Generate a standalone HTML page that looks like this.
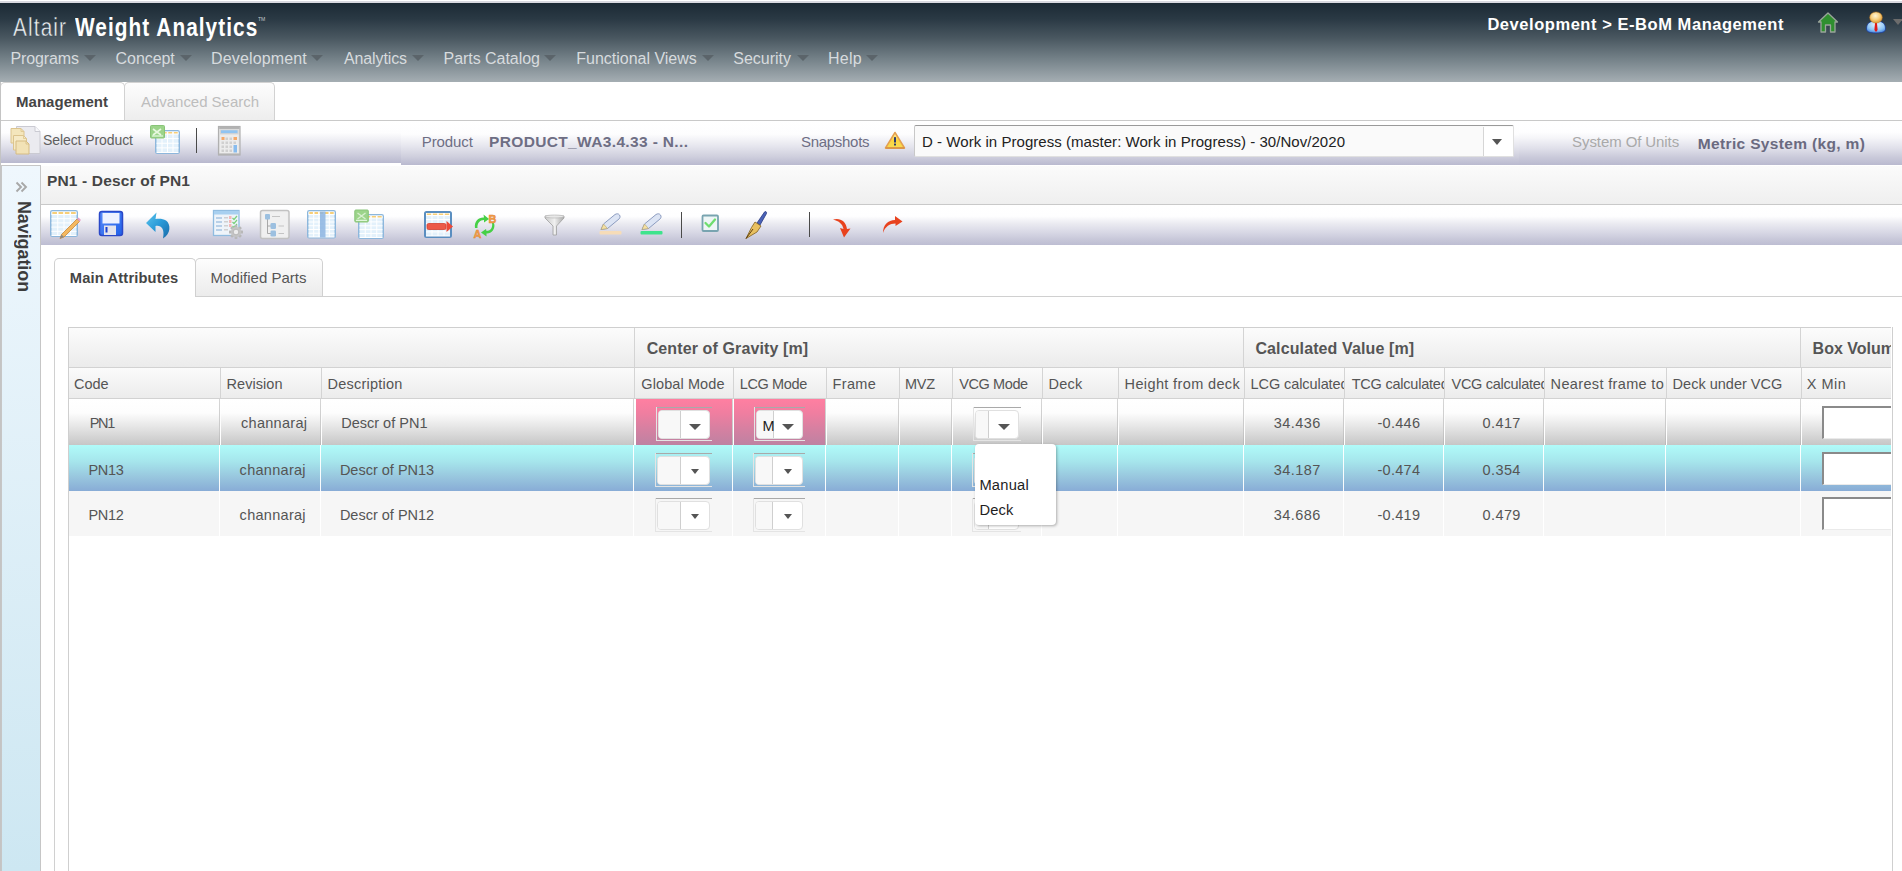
<!DOCTYPE html>
<html><head><meta charset="utf-8">
<style>
*{box-sizing:border-box;margin:0;padding:0}
html,body{width:1902px;height:871px;overflow:hidden;background:#fff;font-family:"Liberation Sans",sans-serif;position:relative}
.a{position:absolute}
.t{position:absolute;white-space:nowrap;line-height:1}
.tri{position:absolute;width:0;height:0;border-left:6px solid transparent;border-right:6px solid transparent;border-top:6.5px solid #5b646a}
svg{position:absolute;overflow:visible}
</style></head><body>
<div class="a" style="left:0;top:1px;width:1902px;height:2px;background:#d9d9e0"></div>
<div class="a" style="left:0;top:3px;width:1902px;height:79px;background:linear-gradient(#1c2a35 0%,#2a3944 20%,#4a5861 45%,#76838a 72%,#a5aeb3 100%)"></div>
<div class="t" style="left:13.00px;top:14px;color:#eef1f3;font-size:26px;letter-spacing:1.403px;transform-origin:0 0;transform:scaleX(0.8000);-webkit-text-stroke:0.45px #34444f;">Altair</div>
<div class="t" style="left:75.00px;top:14px;color:#ffffff;font-size:26px;font-weight:bold;letter-spacing:1.316px;transform-origin:0 0;transform:scaleX(0.8000);">Weight Analytics</div>
<div class="t" style="left:257.5px;top:16px;font-size:6px;color:#c4c8cc;transform-origin:0 0;transform:scaleX(.85)">TM</div>
<div class="t" style="left:10.50px;top:51px;color:#d7dbde;font-size:16px;letter-spacing:-0.122px;">Programs</div>
<div class="tri" style="left:84px;top:55px"></div>
<div class="t" style="left:115.60px;top:51px;color:#d7dbde;font-size:16px;letter-spacing:-0.066px;">Concept</div>
<div class="tri" style="left:180px;top:55px"></div>
<div class="t" style="left:211.00px;top:51px;color:#d7dbde;font-size:16px;letter-spacing:0.153px;">Development</div>
<div class="tri" style="left:311px;top:55px"></div>
<div class="t" style="left:344.00px;top:51px;color:#d7dbde;font-size:16px;letter-spacing:-0.128px;">Analytics</div>
<div class="tri" style="left:412px;top:55px"></div>
<div class="t" style="left:443.50px;top:51px;color:#d7dbde;font-size:16px;letter-spacing:-0.036px;">Parts Catalog</div>
<div class="tri" style="left:544px;top:55px"></div>
<div class="t" style="left:576.30px;top:51px;color:#d7dbde;font-size:16px;letter-spacing:-0.010px;">Functional Views</div>
<div class="tri" style="left:702px;top:55px"></div>
<div class="t" style="left:733.30px;top:51px;color:#d7dbde;font-size:16px;letter-spacing:-0.028px;">Security</div>
<div class="tri" style="left:796.5px;top:55px"></div>
<div class="t" style="left:828.00px;top:51px;color:#d7dbde;font-size:16px;letter-spacing:0.231px;">Help</div>
<div class="tri" style="left:866px;top:55px"></div>
<div class="t" style="left:1487.40px;top:16px;color:#ffffff;font-size:16.5px;font-weight:bold;letter-spacing:0.549px;">Development &gt; E-BoM Management</div>
<div class="a" style="left:0;top:82px;width:125px;height:39px;background:#fff;border:1px solid #d2d2d2;border-bottom:none;border-radius:5px 5px 0 0"></div>
<div class="a" style="left:124px;top:82px;width:151px;height:39px;background:linear-gradient(#fdfdfd,#ededed);border:1px solid #d2d2d2;border-bottom:none;border-radius:5px 5px 0 0"></div>
<div class="a" style="left:0;top:120px;width:1902px;height:1px;background:#c9c9c9"></div>
<div class="t" style="left:16.00px;top:94px;color:#454545;font-size:15px;font-weight:bold;letter-spacing:0.035px;">Management</div>
<div class="t" style="left:141.00px;top:94px;color:#bdbdbd;font-size:15px;letter-spacing:-0.029px;">Advanced Search</div>
<div class="a" style="left:1px;top:121px;width:400px;height:42px;background:linear-gradient(#fff 0%,#fdfdfe 28%,#e6e6ee 55%,#cfcfde 78%,#b8b8ce 100%)"></div>
<div class="a" style="left:401px;top:121px;width:1118px;height:44px;background:linear-gradient(#fff 0%,#fdfdfe 30%,#e6e6ee 57%,#d0d0de 80%,#b9b9cf 100%)"></div><div class="a" style="left:1519px;top:121px;width:383px;height:44px;background:linear-gradient(#fff 0%,#fefeff 25%,#f6f6f9 38%,#e0e0ea 62%,#cacada 82%,#b9b9cf 100%)"></div>
<div class="a" style="left:0;top:82px;width:1px;height:789px;background:#c4c4c4"></div>
<div class="t" style="left:43.00px;top:133px;color:#5e5e5e;font-size:14px;letter-spacing:-0.081px;">Select Product</div>
<div class="a" style="left:196px;top:128px;width:1px;height:25px;background:#4a4a4a"></div>
<div class="t" style="left:421.80px;top:134px;color:#6e6e84;font-size:15px;letter-spacing:-0.116px;">Product</div>
<div class="t" style="left:489.00px;top:134px;color:#6e6e84;font-size:15.5px;font-weight:bold;letter-spacing:0.354px;">PRODUCT_WA3.4.33 - N...</div>
<div class="t" style="left:801.00px;top:134px;color:#6e6e84;font-size:15px;letter-spacing:-0.298px;">Snapshots</div>
<div class="a" style="left:914px;top:125px;width:600px;height:32px;background:#fafafa;border:1px solid #e0e0e0;border-top:1px solid #9a9a9a;border-left:1px solid #c8c8c8;border-radius:2px"></div>
<div class="a" style="left:1483px;top:127px;width:30px;height:29px;background:#fff;border-left:1px solid #d6d6d6"></div>
<div class="a" style="left:1492px;top:139px;width:0;height:0;border-left:5.5px solid transparent;border-right:5.5px solid transparent;border-top:6px solid #555"></div>
<div class="t" style="left:922.00px;top:134px;color:#222;font-size:15px;letter-spacing:0.043px;">D - Work in Progress (master: Work in Progress) - 30/Nov/2020</div>
<div class="t" style="left:1572.10px;top:134px;color:#a9a9a9;font-size:15px;letter-spacing:-0.090px;">System Of Units</div>
<div class="t" style="left:1697.80px;top:136px;color:#6a6a80;font-size:15.5px;font-weight:bold;letter-spacing:0.344px;">Metric System (kg, m)</div>
<div class="a" style="left:1px;top:165px;width:40px;height:706px;border:1px solid #c6c6c6;border-bottom:none;background:linear-gradient(#eff7fd,#cde7f2)"></div>
<svg style="left:14px;top:180px" width="16" height="14" viewBox="0 0 16 14"><path d="M2.5 2.5 L7 7 L2.5 11.5 M7.5 2.5 L12 7 L7.5 11.5" stroke="#a8a8a8" stroke-width="1.9" fill="none"/></svg>
<div class="a" style="left:41px;top:166px;width:1861px;height:39px;background:linear-gradient(#fbfbfb,#efefef);border-bottom:1px solid #c9c9c9"></div>
<div class="t" style="left:47.00px;top:173px;color:#454545;font-size:15.5px;font-weight:bold;letter-spacing:0.152px;">PN1 - Descr of PN1</div>
<div class="a" style="left:41px;top:205px;width:1861px;height:40px;background:linear-gradient(#fff 0%,#fefeff 28%,#ececf2 45%,#d8d8e5 68%,#c6c6d8 88%,#bdbdd2 100%)"></div>
<div class="a" style="left:54px;top:258px;width:142px;height:39px;background:#fff;border:1px solid #d0d0d0;border-bottom:none;border-radius:5px 5px 0 0"></div>
<div class="a" style="left:195px;top:258px;width:128px;height:39px;background:linear-gradient(#fdfdfd,#ebebeb);border:1px solid #d0d0d0;border-bottom:none;border-radius:5px 5px 0 0"></div>
<div class="a" style="left:195px;top:296px;width:1707px;height:1px;background:#d0d0d0"></div>
<div class="a" style="left:54px;top:296px;width:1px;height:575px;background:#d0d0d0"></div>
<div class="t" style="left:69.80px;top:271px;color:#454545;font-size:14.7px;font-weight:bold;letter-spacing:0.150px;">Main Attributes</div>
<div class="t" style="left:210.50px;top:270px;color:#555;font-size:15px;letter-spacing:0.010px;">Modified Parts</div>
<div class="a" style="left:68px;top:327px;width:1825px;height:544px;border:1px solid #cfcfcf;border-bottom:none"></div>
<div class="a" style="left:69px;top:328px;width:1822px;height:39px;background:linear-gradient(#fcfcfc,#ebebeb)"></div>
<div class="a" style="left:69px;top:367px;width:1822px;height:1px;background:#d2d2d2"></div>
<div class="a" style="left:69px;top:368px;width:1822px;height:30px;background:linear-gradient(#fbfbfb,#ececec)"></div>
<div class="a" style="left:69px;top:398px;width:1822px;height:1px;background:#d2d2d2"></div>
<div class="a" style="left:634px;top:328px;width:1px;height:39px;background:#d4d4d4"></div>
<div class="a" style="left:1243px;top:328px;width:1px;height:39px;background:#d4d4d4"></div>
<div class="a" style="left:1800px;top:328px;width:1px;height:39px;background:#d4d4d4"></div>
<div class="a" style="left:220px;top:368px;width:1px;height:30px;background:#d4d4d4"></div>
<div class="a" style="left:321px;top:368px;width:1px;height:30px;background:#d4d4d4"></div>
<div class="a" style="left:634px;top:368px;width:1px;height:30px;background:#d4d4d4"></div>
<div class="a" style="left:733px;top:368px;width:1px;height:30px;background:#d4d4d4"></div>
<div class="a" style="left:826px;top:368px;width:1px;height:30px;background:#d4d4d4"></div>
<div class="a" style="left:899px;top:368px;width:1px;height:30px;background:#d4d4d4"></div>
<div class="a" style="left:952px;top:368px;width:1px;height:30px;background:#d4d4d4"></div>
<div class="a" style="left:1042px;top:368px;width:1px;height:30px;background:#d4d4d4"></div>
<div class="a" style="left:1118px;top:368px;width:1px;height:30px;background:#d4d4d4"></div>
<div class="a" style="left:1244px;top:368px;width:1px;height:30px;background:#d4d4d4"></div>
<div class="a" style="left:1344px;top:368px;width:1px;height:30px;background:#d4d4d4"></div>
<div class="a" style="left:1444px;top:368px;width:1px;height:30px;background:#d4d4d4"></div>
<div class="a" style="left:1544px;top:368px;width:1px;height:30px;background:#d4d4d4"></div>
<div class="a" style="left:1666px;top:368px;width:1px;height:30px;background:#d4d4d4"></div>
<div class="a" style="left:1801px;top:368px;width:1px;height:30px;background:#d4d4d4"></div>
<div class="t" style="left:646.70px;top:341px;color:#555;font-size:16px;font-weight:bold;letter-spacing:0.113px;">Center of Gravity [m]</div>
<div class="t" style="left:1255.40px;top:341px;color:#555;font-size:16px;font-weight:bold;letter-spacing:0.121px;">Calculated Value [m]</div>
<div class="t" style="left:1812.60px;top:341px;color:#555;font-size:16px;font-weight:bold;">Box Volume</div>
<div class="a" style="left:69px;top:368px;width:151px;height:30px;overflow:hidden"><div class="t" style="left:5.00px;top:9px;color:#555;font-size:14.5px;letter-spacing:-0.055px;">Code</div></div>
<div class="a" style="left:221px;top:368px;width:100px;height:30px;overflow:hidden"><div class="t" style="left:5.50px;top:9px;color:#555;font-size:14.5px;letter-spacing:0.056px;">Revision</div></div>
<div class="a" style="left:322px;top:368px;width:312px;height:30px;overflow:hidden"><div class="t" style="left:5.50px;top:9px;color:#555;font-size:14.5px;letter-spacing:0.227px;">Description</div></div>
<div class="a" style="left:635px;top:368px;width:98px;height:30px;overflow:hidden"><div class="t" style="left:6.30px;top:9px;color:#555;font-size:14.5px;letter-spacing:0.099px;">Global Mode</div></div>
<div class="a" style="left:734px;top:368px;width:92px;height:30px;overflow:hidden"><div class="t" style="left:5.70px;top:9px;color:#555;font-size:14.5px;letter-spacing:-0.373px;">LCG Mode</div></div>
<div class="a" style="left:827px;top:368px;width:72px;height:30px;overflow:hidden"><div class="t" style="left:5.60px;top:9px;color:#555;font-size:14.5px;letter-spacing:0.327px;">Frame</div></div>
<div class="a" style="left:900px;top:368px;width:52px;height:30px;overflow:hidden"><div class="t" style="left:5.00px;top:9px;color:#555;font-size:14.5px;letter-spacing:-0.254px;">MVZ</div></div>
<div class="a" style="left:953px;top:368px;width:89px;height:30px;overflow:hidden"><div class="t" style="left:6.30px;top:9px;color:#555;font-size:14.5px;letter-spacing:-0.417px;">VCG Mode</div></div>
<div class="a" style="left:1043px;top:368px;width:75px;height:30px;overflow:hidden"><div class="t" style="left:5.40px;top:9px;color:#555;font-size:14.5px;letter-spacing:0.288px;">Deck</div></div>
<div class="a" style="left:1119px;top:368px;width:125px;height:30px;overflow:hidden"><div class="t" style="left:5.60px;top:9px;color:#555;font-size:14.5px;letter-spacing:0.367px;">Height from deck</div></div>
<div class="a" style="left:1245px;top:368px;width:99px;height:30px;overflow:hidden"><div class="t" style="left:5.60px;top:9px;color:#555;font-size:14.5px;letter-spacing:-0.087px;">LCG calculated</div></div>
<div class="a" style="left:1345px;top:368px;width:99px;height:30px;overflow:hidden"><div class="t" style="left:6.70px;top:9px;color:#555;font-size:14.5px;letter-spacing:-0.225px;">TCG calculated</div></div>
<div class="a" style="left:1445px;top:368px;width:99px;height:30px;overflow:hidden"><div class="t" style="left:6.50px;top:9px;color:#555;font-size:14.5px;letter-spacing:-0.288px;">VCG calculated</div></div>
<div class="a" style="left:1545px;top:368px;width:121px;height:30px;overflow:hidden"><div class="t" style="left:5.60px;top:9px;color:#555;font-size:14.5px;letter-spacing:0.348px;">Nearest frame to</div></div>
<div class="a" style="left:1667px;top:368px;width:134px;height:30px;overflow:hidden"><div class="t" style="left:5.60px;top:9px;color:#555;font-size:14.5px;letter-spacing:0.008px;">Deck under VCG</div></div>
<div class="a" style="left:1802px;top:368px;width:89px;height:30px;overflow:hidden"><div class="t" style="left:4.80px;top:9px;color:#555;font-size:14.5px;letter-spacing:0.484px;">X Min</div></div>
<div class="a" style="left:69px;top:399px;width:1822px;height:46px;background:linear-gradient(#ffffff 0%,#fdfdfd 30%,#e6e6e6 60%,#c6c6c6 100%)"></div>
<div class="a" style="left:69px;top:445px;width:1822px;height:46px;background:linear-gradient(#b0fbf9 0%,#a6e6ec 35%,#98c6de 70%,#88acd6 100%)"></div>
<div class="a" style="left:69px;top:491px;width:1822px;height:45px;background:#f6f6f6"></div>
<div class="a" style="left:636px;top:399px;width:97px;height:46px;background:linear-gradient(#ff7fa1 0%,#f07ea0 30%,#d680a1 65%,#be82a2 100%)"></div>
<div class="a" style="left:734px;top:399px;width:92px;height:46px;background:linear-gradient(#ff7fa1 0%,#f07ea0 30%,#d680a1 65%,#be82a2 100%)"></div>
<div class="a" style="left:219px;top:399px;width:1px;height:46px;background:linear-gradient(#d6d6d6,#c8c8c8 70%,#b8b8b8)"></div>
<div class="a" style="left:220px;top:399px;width:1px;height:46px;background:linear-gradient(rgba(255,255,255,.3),#fff 60%)"></div>
<div class="a" style="left:320px;top:399px;width:1px;height:46px;background:linear-gradient(#d6d6d6,#c8c8c8 70%,#b8b8b8)"></div>
<div class="a" style="left:321px;top:399px;width:1px;height:46px;background:linear-gradient(rgba(255,255,255,.3),#fff 60%)"></div>
<div class="a" style="left:633px;top:399px;width:1px;height:46px;background:linear-gradient(#d6d6d6,#c8c8c8 70%,#b8b8b8)"></div>
<div class="a" style="left:634px;top:399px;width:1px;height:46px;background:linear-gradient(rgba(255,255,255,.3),#fff 60%)"></div>
<div class="a" style="left:635px;top:399px;width:1px;height:46px;background:linear-gradient(rgba(255,255,255,.3),#fff 60%)"></div>
<div class="a" style="left:732px;top:399px;width:1px;height:46px;background:linear-gradient(#d6d6d6,#c8c8c8 70%,#b8b8b8)"></div>
<div class="a" style="left:733px;top:399px;width:1px;height:46px;background:linear-gradient(rgba(255,255,255,.3),#fff 60%)"></div>
<div class="a" style="left:825px;top:399px;width:1px;height:46px;background:linear-gradient(#d6d6d6,#c8c8c8 70%,#b8b8b8)"></div>
<div class="a" style="left:826px;top:399px;width:1px;height:46px;background:linear-gradient(rgba(255,255,255,.3),#fff 60%)"></div>
<div class="a" style="left:898px;top:399px;width:1px;height:46px;background:linear-gradient(#d6d6d6,#c8c8c8 70%,#b8b8b8)"></div>
<div class="a" style="left:899px;top:399px;width:1px;height:46px;background:linear-gradient(rgba(255,255,255,.3),#fff 60%)"></div>
<div class="a" style="left:951px;top:399px;width:1px;height:46px;background:linear-gradient(#d6d6d6,#c8c8c8 70%,#b8b8b8)"></div>
<div class="a" style="left:952px;top:399px;width:1px;height:46px;background:linear-gradient(rgba(255,255,255,.3),#fff 60%)"></div>
<div class="a" style="left:1041px;top:399px;width:1px;height:46px;background:linear-gradient(#d6d6d6,#c8c8c8 70%,#b8b8b8)"></div>
<div class="a" style="left:1042px;top:399px;width:1px;height:46px;background:linear-gradient(rgba(255,255,255,.3),#fff 60%)"></div>
<div class="a" style="left:1117px;top:399px;width:1px;height:46px;background:linear-gradient(#d6d6d6,#c8c8c8 70%,#b8b8b8)"></div>
<div class="a" style="left:1118px;top:399px;width:1px;height:46px;background:linear-gradient(rgba(255,255,255,.3),#fff 60%)"></div>
<div class="a" style="left:1243px;top:399px;width:1px;height:46px;background:linear-gradient(#d6d6d6,#c8c8c8 70%,#b8b8b8)"></div>
<div class="a" style="left:1244px;top:399px;width:1px;height:46px;background:linear-gradient(rgba(255,255,255,.3),#fff 60%)"></div>
<div class="a" style="left:1343px;top:399px;width:1px;height:46px;background:linear-gradient(#d6d6d6,#c8c8c8 70%,#b8b8b8)"></div>
<div class="a" style="left:1344px;top:399px;width:1px;height:46px;background:linear-gradient(rgba(255,255,255,.3),#fff 60%)"></div>
<div class="a" style="left:1443px;top:399px;width:1px;height:46px;background:linear-gradient(#d6d6d6,#c8c8c8 70%,#b8b8b8)"></div>
<div class="a" style="left:1444px;top:399px;width:1px;height:46px;background:linear-gradient(rgba(255,255,255,.3),#fff 60%)"></div>
<div class="a" style="left:1543px;top:399px;width:1px;height:46px;background:linear-gradient(#d6d6d6,#c8c8c8 70%,#b8b8b8)"></div>
<div class="a" style="left:1544px;top:399px;width:1px;height:46px;background:linear-gradient(rgba(255,255,255,.3),#fff 60%)"></div>
<div class="a" style="left:1665px;top:399px;width:1px;height:46px;background:linear-gradient(#d6d6d6,#c8c8c8 70%,#b8b8b8)"></div>
<div class="a" style="left:1666px;top:399px;width:1px;height:46px;background:linear-gradient(rgba(255,255,255,.3),#fff 60%)"></div>
<div class="a" style="left:1800px;top:399px;width:1px;height:46px;background:linear-gradient(#d6d6d6,#c8c8c8 70%,#b8b8b8)"></div>
<div class="a" style="left:1801px;top:399px;width:1px;height:46px;background:linear-gradient(rgba(255,255,255,.3),#fff 60%)"></div>
<div class="a" style="left:219px;top:445px;width:1px;height:91px;background:#fff;opacity:.95"></div>
<div class="a" style="left:320px;top:445px;width:1px;height:91px;background:#fff;opacity:.95"></div>
<div class="a" style="left:633px;top:445px;width:1px;height:91px;background:#fff;opacity:.95"></div>
<div class="a" style="left:732px;top:445px;width:1px;height:91px;background:#fff;opacity:.95"></div>
<div class="a" style="left:825px;top:445px;width:1px;height:91px;background:#fff;opacity:.95"></div>
<div class="a" style="left:898px;top:445px;width:1px;height:91px;background:#fff;opacity:.95"></div>
<div class="a" style="left:951px;top:445px;width:1px;height:91px;background:#fff;opacity:.95"></div>
<div class="a" style="left:1041px;top:445px;width:1px;height:91px;background:#fff;opacity:.95"></div>
<div class="a" style="left:1117px;top:445px;width:1px;height:91px;background:#fff;opacity:.95"></div>
<div class="a" style="left:1243px;top:445px;width:1px;height:91px;background:#fff;opacity:.95"></div>
<div class="a" style="left:1343px;top:445px;width:1px;height:91px;background:#fff;opacity:.95"></div>
<div class="a" style="left:1443px;top:445px;width:1px;height:91px;background:#fff;opacity:.95"></div>
<div class="a" style="left:1543px;top:445px;width:1px;height:91px;background:#fff;opacity:.95"></div>
<div class="a" style="left:1665px;top:445px;width:1px;height:91px;background:#fff;opacity:.95"></div>
<div class="a" style="left:1800px;top:445px;width:1px;height:91px;background:#fff;opacity:.95"></div>
<div class="t" style="left:89.80px;top:416px;color:#555;font-size:14.5px;letter-spacing:-1.354px;">PN1</div>
<div class="t" style="left:241.00px;top:416px;color:#555;font-size:14.5px;letter-spacing:0.289px;">channaraj</div>
<div class="t" style="left:341.20px;top:416px;color:#555;font-size:14.5px;letter-spacing:0.007px;">Descr of PN1</div>
<div class="t" style="left:1273.80px;top:416px;color:#555;font-size:14.5px;letter-spacing:0.450px;">34.436</div>
<div class="t" style="left:1377.50px;top:416px;color:#555;font-size:14.5px;letter-spacing:0.277px;">-0.446</div>
<div class="t" style="left:1482.60px;top:416px;color:#555;font-size:14.5px;letter-spacing:0.379px;">0.417</div>
<div class="t" style="left:88.50px;top:463px;color:#555;font-size:14.5px;letter-spacing:-0.357px;">PN13</div>
<div class="t" style="left:239.60px;top:463px;color:#555;font-size:14.5px;letter-spacing:0.289px;">channaraj</div>
<div class="t" style="left:339.90px;top:463px;color:#555;font-size:14.5px;letter-spacing:0.001px;">Descr of PN13</div>
<div class="t" style="left:1273.80px;top:463px;color:#555;font-size:14.5px;letter-spacing:0.450px;">34.187</div>
<div class="t" style="left:1377.50px;top:463px;color:#555;font-size:14.5px;letter-spacing:0.277px;">-0.474</div>
<div class="t" style="left:1482.60px;top:463px;color:#555;font-size:14.5px;letter-spacing:0.379px;">0.354</div>
<div class="t" style="left:88.50px;top:508px;color:#555;font-size:14.5px;letter-spacing:-0.357px;">PN12</div>
<div class="t" style="left:239.60px;top:508px;color:#555;font-size:14.5px;letter-spacing:0.289px;">channaraj</div>
<div class="t" style="left:339.90px;top:508px;color:#555;font-size:14.5px;letter-spacing:0.001px;">Descr of PN12</div>
<div class="t" style="left:1273.80px;top:508px;color:#555;font-size:14.5px;letter-spacing:0.450px;">34.686</div>
<div class="t" style="left:1377.50px;top:508px;color:#555;font-size:14.5px;letter-spacing:0.277px;">-0.419</div>
<div class="t" style="left:1482.60px;top:508px;color:#555;font-size:14.5px;letter-spacing:0.379px;">0.479</div>
<div class="a" style="left:656px;top:407px;width:56px;height:34px"><div class="a" style="left:0;top:0;width:56px;height:1px;background:#a9a9a9"></div><div class="a" style="left:0;top:0;width:1px;height:34px;background:#e4e4e4"></div><div class="a" style="left:0;top:33px;width:56px;height:1px;background:#e4e4e4"></div><div class="a" style="left:2px;top:3px;width:52px;height:29px;background:#fff;border:1px solid #e0e0e0;border-radius:4px;overflow:hidden"><div class="a" style="left:0;top:0;width:21.5px;height:100%;background:#f8f8f8;border-right:1px solid #cfcfcf"></div></div><div class="a" style="left:33.2px;top:17px;width:0;height:0;border-left:6.0px solid transparent;border-right:6.0px solid transparent;border-top:6px solid #555"></div></div>
<div class="a" style="left:754px;top:407px;width:51px;height:34px"><div class="a" style="left:0;top:0;width:51px;height:1px;background:#a9a9a9"></div><div class="a" style="left:0;top:0;width:1px;height:34px;background:#e4e4e4"></div><div class="a" style="left:0;top:33px;width:51px;height:1px;background:#e4e4e4"></div><div class="a" style="left:2px;top:3px;width:47px;height:29px;background:#fff;border:1px solid #e0e0e0;border-radius:4px;overflow:hidden"><div class="a" style="left:0;top:0;width:16.6px;height:100%;background:#f8f8f8;border-right:1px solid #cfcfcf"></div></div><div class="a" style="left:28.3px;top:17px;width:0;height:0;border-left:6.0px solid transparent;border-right:6.0px solid transparent;border-top:6px solid #555"></div><div class="t" style="left:8.60px;top:12px;color:#222;font-size:14.5px;">M</div></div>
<div class="a" style="left:973px;top:407px;width:48px;height:34px"><div class="a" style="left:0;top:0;width:48px;height:1px;background:#a9a9a9"></div><div class="a" style="left:0;top:0;width:1px;height:34px;background:#e4e4e4"></div><div class="a" style="left:0;top:33px;width:48px;height:1px;background:#e4e4e4"></div><div class="a" style="left:2px;top:3px;width:44px;height:29px;background:#fff;border:1px solid #e0e0e0;border-radius:4px;overflow:hidden"><div class="a" style="left:0;top:0;width:13.399999999999999px;height:100%;background:#f8f8f8;border-right:1px solid #cfcfcf"></div></div><div class="a" style="left:25.2px;top:17px;width:0;height:0;border-left:6.0px solid transparent;border-right:6.0px solid transparent;border-top:6px solid #555"></div></div>
<div class="a" style="left:655px;top:453px;width:57px;height:34px"><div class="a" style="left:0;top:0;width:57px;height:1px;background:#a9a9a9"></div><div class="a" style="left:0;top:0;width:1px;height:34px;background:#e4e4e4"></div><div class="a" style="left:0;top:33px;width:57px;height:1px;background:#e4e4e4"></div><div class="a" style="left:2px;top:3px;width:53px;height:29px;background:#fff;border:1px solid #e0e0e0;border-radius:4px;overflow:hidden"><div class="a" style="left:0;top:0;width:22.5px;height:100%;background:#f8f8f8;border-right:1px solid #cfcfcf"></div></div><div class="a" style="left:35.8px;top:16px;width:0;height:0;border-left:4.5px solid transparent;border-right:4.5px solid transparent;border-top:5px solid #555"></div></div>
<div class="a" style="left:753px;top:453px;width:52px;height:34px"><div class="a" style="left:0;top:0;width:52px;height:1px;background:#a9a9a9"></div><div class="a" style="left:0;top:0;width:1px;height:34px;background:#e4e4e4"></div><div class="a" style="left:0;top:33px;width:52px;height:1px;background:#e4e4e4"></div><div class="a" style="left:2px;top:3px;width:48px;height:29px;background:#fff;border:1px solid #e0e0e0;border-radius:4px;overflow:hidden"><div class="a" style="left:0;top:0;width:17.3px;height:100%;background:#f8f8f8;border-right:1px solid #cfcfcf"></div></div><div class="a" style="left:30.6px;top:16px;width:0;height:0;border-left:4.5px solid transparent;border-right:4.5px solid transparent;border-top:5px solid #555"></div></div>
<div class="a" style="left:972px;top:453px;width:49px;height:34px"><div class="a" style="left:0;top:0;width:49px;height:1px;background:#a9a9a9"></div><div class="a" style="left:0;top:0;width:1px;height:34px;background:#e4e4e4"></div><div class="a" style="left:0;top:33px;width:49px;height:1px;background:#e4e4e4"></div><div class="a" style="left:2px;top:3px;width:45px;height:29px;background:#fff;border:1px solid #e0e0e0;border-radius:4px;overflow:hidden"><div class="a" style="left:0;top:0;width:14.399999999999999px;height:100%;background:#f8f8f8;border-right:1px solid #cfcfcf"></div></div><div class="a" style="left:27.7px;top:16px;width:0;height:0;border-left:4.5px solid transparent;border-right:4.5px solid transparent;border-top:5px solid #555"></div></div>
<div class="a" style="left:655px;top:498px;width:57px;height:34px"><div class="a" style="left:0;top:0;width:57px;height:1px;background:#a9a9a9"></div><div class="a" style="left:0;top:0;width:1px;height:34px;background:#e4e4e4"></div><div class="a" style="left:0;top:33px;width:57px;height:1px;background:#e4e4e4"></div><div class="a" style="left:2px;top:3px;width:53px;height:29px;background:#fff;border:1px solid #e0e0e0;border-radius:4px;overflow:hidden"><div class="a" style="left:0;top:0;width:22.5px;height:100%;background:#f8f8f8;border-right:1px solid #cfcfcf"></div></div><div class="a" style="left:35.8px;top:16px;width:0;height:0;border-left:4.5px solid transparent;border-right:4.5px solid transparent;border-top:5px solid #555"></div></div>
<div class="a" style="left:753px;top:498px;width:52px;height:34px"><div class="a" style="left:0;top:0;width:52px;height:1px;background:#a9a9a9"></div><div class="a" style="left:0;top:0;width:1px;height:34px;background:#e4e4e4"></div><div class="a" style="left:0;top:33px;width:52px;height:1px;background:#e4e4e4"></div><div class="a" style="left:2px;top:3px;width:48px;height:29px;background:#fff;border:1px solid #e0e0e0;border-radius:4px;overflow:hidden"><div class="a" style="left:0;top:0;width:17.3px;height:100%;background:#f8f8f8;border-right:1px solid #cfcfcf"></div></div><div class="a" style="left:30.6px;top:16px;width:0;height:0;border-left:4.5px solid transparent;border-right:4.5px solid transparent;border-top:5px solid #555"></div></div>
<div class="a" style="left:972px;top:498px;width:49px;height:34px"><div class="a" style="left:0;top:0;width:49px;height:1px;background:#a9a9a9"></div><div class="a" style="left:0;top:0;width:1px;height:34px;background:#e4e4e4"></div><div class="a" style="left:0;top:33px;width:49px;height:1px;background:#e4e4e4"></div><div class="a" style="left:2px;top:3px;width:45px;height:29px;background:#fff;border:1px solid #e0e0e0;border-radius:4px;overflow:hidden"><div class="a" style="left:0;top:0;width:14.399999999999999px;height:100%;background:#f8f8f8;border-right:1px solid #cfcfcf"></div></div><div class="a" style="left:27.7px;top:16px;width:0;height:0;border-left:4.5px solid transparent;border-right:4.5px solid transparent;border-top:5px solid #555"></div></div>
<div class="a" style="left:1822px;top:406px;width:80px;height:33px;background:#fff;border-top:2px solid #8a8a8a;border-left:2px solid #8a8a8a;border-bottom:1px solid #eaeaea"></div>
<div class="a" style="left:1822px;top:452px;width:80px;height:33px;background:#fff;border-top:2px solid #8a8a8a;border-left:2px solid #8a8a8a;border-bottom:1px solid #eaeaea"></div>
<div class="a" style="left:1822px;top:497px;width:80px;height:33px;background:#fff;border-top:2px solid #8a8a8a;border-left:2px solid #8a8a8a;border-bottom:1px solid #eaeaea"></div>
<div class="a" style="left:1891px;top:327px;width:11px;height:544px;background:#fff"></div>
<div class="a" style="left:1892px;top:327px;width:1px;height:544px;background:#cfcfcf"></div>
<div class="a" style="left:975px;top:444px;width:81px;height:81px;background:#fff;border-radius:4px;box-shadow:1px 1px 3px rgba(0,0,0,.3)"></div>
<div class="t" style="left:979.40px;top:478px;color:#1e1e1e;font-size:14.7px;letter-spacing:0.226px;">Manual</div>
<div class="t" style="left:979.40px;top:503px;color:#1e1e1e;font-size:14.7px;letter-spacing:0.146px;">Deck</div>
<div class="a" style="left:33px;top:202px;width:89px;height:20px;transform-origin:0 0;transform:rotate(90deg)"><div class="t" style="left:-1.00px;top:0px;color:#3c3c3c;font-size:18px;font-weight:bold;transform-origin:0 0;transform:scaleX(0.9895);">Navigation</div></div>
<svg style="left:1817px;top:11px" width="22" height="22" viewBox="0 0 22 22"><path d="M11 2 L1.5 11 L4 11 L4 21 L8.5 21 L8.5 14 L13.5 14 L13.5 21 L18 21 L18 11 L20.5 11 Z" fill="#2f8f2f" stroke="#9aa59a" stroke-width="1.3" stroke-linejoin="round"/></svg>
<svg style="left:1864px;top:10px" width="24" height="24" viewBox="0 0 24 24"><defs><radialGradient id="uh" cx=".45" cy=".35" r=".6"><stop offset="0" stop-color="#fff6d8"/><stop offset=".6" stop-color="#f8cf7c"/><stop offset="1" stop-color="#e0a040"/></radialGradient><radialGradient id="ub" cx=".5" cy=".3" r=".8"><stop offset="0" stop-color="#e8f4ff"/><stop offset=".6" stop-color="#8cc4f4"/><stop offset="1" stop-color="#2a6ad8"/></radialGradient></defs><path d="M2.5 19 C2.5 13 6 11 12 11 C18 11 21.5 13 21.5 19 C21.5 22 18 23 12 23 C6 23 2.5 22 2.5 19Z" fill="url(#ub)" stroke="#1a3a90" stroke-width=".8"/><path d="M11 13 L13 13 L13.6 20 L12 22 L10.4 20Z" fill="#e01818"/><ellipse cx="12" cy="7.5" rx="6.3" ry="5.6" fill="url(#uh)" stroke="#c07820" stroke-width=".5"/></svg>
<div class="a" style="left:1893px;top:19px;width:0;height:0;border-left:5px solid transparent;border-right:5px solid transparent;border-top:6px solid #6c6c6c"></div>
<svg style="left:9px;top:124px" width="33" height="33" viewBox="0 0 33 33"><path d="M7.5 2.5 L26 2.5 L31 7.5 L31 29.5 L7.5 29.5Z" fill="#ebebf0" stroke="#cacad2" stroke-width="1"/><path d="M26 2.5 L26 7.5 L31 7.5" fill="#f8f8fb" stroke="#cacad2" stroke-width="1"/><path d="M2 4.5 L12 4.5 L15 7.5 L15 19 L2 19Z" fill="#f4e6bc" stroke="#dcc48e" stroke-width="1"/><path d="M12 4.5 L12 7.5 L15 7.5" fill="none" stroke="#dcc48e" stroke-width=".8"/><path d="M4.5 11.5 L14.5 11.5 L17.5 14.5 L17.5 26 L4.5 26Z" fill="#f6eac6" stroke="#dcc48e" stroke-width="1"/><path d="M14.5 11.5 L14.5 14.5 L17.5 14.5" fill="none" stroke="#dcc48e" stroke-width=".8"/><path d="M7 17 L17 17 L20 20 L20 30 L7 30Z" fill="#f2e2b6" stroke="#d6bc84" stroke-width="1"/><path d="M17 17 L17 20 L20 20" fill="none" stroke="#d6bc84" stroke-width=".8"/></svg>
<svg style="left:150px;top:125px" width="31" height="31" viewBox="0 0 31 31"><g transform="translate(5,5)"><rect x="0.75" y="0.75" width="23.5" height="22.5" rx="1.5" fill="#e3f1fb" stroke="#8db7dc" stroke-width="1.5"/><rect x="1.5" y="1.5" width="22.0" height="2.5" fill="#fff"/><rect x="2.30" y="2.0" width="3.90" height="2.0" fill="#f7cf78"/><rect x="7.80" y="2.0" width="3.90" height="2.0" fill="#f7cf78"/><rect x="13.30" y="2.0" width="3.90" height="2.0" fill="#f7cf78"/><rect x="18.80" y="2.0" width="3.90" height="2.0" fill="#f7cf78"/><line x1="1.5" y1="4.00" x2="23.5" y2="4.00" stroke="#fff" stroke-width="1"/><line x1="1.5" y1="8.62" x2="23.5" y2="8.62" stroke="#fff" stroke-width="1"/><line x1="1.5" y1="13.25" x2="23.5" y2="13.25" stroke="#fff" stroke-width="1"/><line x1="1.5" y1="17.88" x2="23.5" y2="17.88" stroke="#fff" stroke-width="1"/><line x1="1.5" y1="22.50" x2="23.5" y2="22.50" stroke="#fff" stroke-width="1"/><line x1="7.00" y1="4" x2="7.00" y2="22.5" stroke="#fff" stroke-width="1"/><line x1="12.50" y1="4" x2="12.50" y2="22.5" stroke="#fff" stroke-width="1"/><line x1="18.00" y1="4" x2="18.00" y2="22.5" stroke="#fff" stroke-width="1"/></g><rect x="0.5" y="0.5" width="14" height="12.5" rx="1" fill="#9cd48a" stroke="#88c478" stroke-width="1"/><path d="M3 4 L11 10 M11 4 L3 10" stroke="#e8f8e0" stroke-width="1.6"/><rect x="2" y="10.5" width="11" height="1" fill="#f0fff0"/></svg>
<svg style="left:217px;top:125px" width="25" height="31" viewBox="0 0 25 31"><rect x="1.5" y="1.5" width="21.5" height="28.5" fill="#e2e2e2" stroke="#b0b0b0" stroke-width="1.2"/><rect x="2.2" y="2.2" width="20.2" height="1.6" fill="#a8a8a8"/><rect x="3" y="4.5" width="18.5" height="4.5" fill="#d4d4d4"/><rect x="4" y="5.3" width="16.5" height="2.8" fill="#90c4f2"/><rect x="3" y="10" width="18.5" height="18" fill="#ececec"/><rect x="4.5" y="12" width="3" height="3" fill="#f6a868"/><rect x="16.5" y="12" width="3.5" height="3" fill="#f6a868"/><g fill="#d0d0d0"><rect x="8.5" y="12.5" width="2.5" height="2.5"/><rect x="12.5" y="12.5" width="2.5" height="2.5"/><rect x="4.5" y="16.5" width="2.5" height="2.5"/><rect x="8.5" y="16.5" width="2.5" height="2.5"/><rect x="12.5" y="16.5" width="2.5" height="2.5"/><rect x="16.5" y="16.5" width="2.5" height="2.5"/><rect x="4.5" y="20.5" width="2.5" height="2.5"/><rect x="8.5" y="20.5" width="2.5" height="2.5"/><rect x="12.5" y="20.5" width="2.5" height="2.5"/><rect x="4.5" y="24.5" width="2.5" height="2.5"/><rect x="8.5" y="24.5" width="2.5" height="2.5"/><rect x="12.5" y="24.5" width="2.5" height="2.5"/></g><rect x="16.5" y="20" width="3.5" height="7.5" fill="#88bcee"/><rect x="1.5" y="28.5" width="21.5" height="1.5" fill="#b4b4b4"/></svg>
<svg style="left:883px;top:130px" width="24" height="21" viewBox="0 0 24 21"><defs><linearGradient id="wg" x1="0" y1="0" x2="0" y2="1"><stop offset="0" stop-color="#fff2b0"/><stop offset=".5" stop-color="#fcd440"/><stop offset="1" stop-color="#f8dc50"/></linearGradient></defs><path d="M12 2.5 L21.5 18 L2.5 18 Z" fill="url(#wg)" stroke="#e4a050" stroke-width="1.5" stroke-linejoin="round"/><rect x="2.5" y="17.3" width="19" height="1.5" fill="#d89040"/><rect x="11" y="7" width="2" height="5.5" rx=".6" fill="#2c3c70"/><rect x="11" y="13.6" width="2" height="2" rx=".5" fill="#2c3c70"/></svg>
<svg style="left:49px;top:209px" width="33" height="31" viewBox="0 0 33 31"><g transform="translate(1,1)"><rect x="0.75" y="0.75" width="26.5" height="25.5" rx="1.5" fill="#e3f1fb" stroke="#8db7dc" stroke-width="1.5"/><rect x="1.5" y="1.5" width="25.0" height="3.0" fill="#fff"/><rect x="2.30" y="2.0" width="4.65" height="2.5" fill="#f7cf78"/><rect x="8.55" y="2.0" width="4.65" height="2.5" fill="#f7cf78"/><rect x="14.80" y="2.0" width="4.65" height="2.5" fill="#f7cf78"/><rect x="21.05" y="2.0" width="4.65" height="2.5" fill="#f7cf78"/><line x1="1.5" y1="4.50" x2="26.5" y2="4.50" stroke="#fff" stroke-width="1"/><line x1="1.5" y1="8.70" x2="26.5" y2="8.70" stroke="#fff" stroke-width="1"/><line x1="1.5" y1="12.90" x2="26.5" y2="12.90" stroke="#fff" stroke-width="1"/><line x1="1.5" y1="17.10" x2="26.5" y2="17.10" stroke="#fff" stroke-width="1"/><line x1="1.5" y1="21.30" x2="26.5" y2="21.30" stroke="#fff" stroke-width="1"/><line x1="1.5" y1="25.50" x2="26.5" y2="25.50" stroke="#fff" stroke-width="1"/><line x1="7.75" y1="4.5" x2="7.75" y2="25.5" stroke="#fff" stroke-width="1"/><line x1="14.00" y1="4.5" x2="14.00" y2="25.5" stroke="#fff" stroke-width="1"/><line x1="20.25" y1="4.5" x2="20.25" y2="25.5" stroke="#fff" stroke-width="1"/></g><path d="M11 29.5 L12.5 25.5 L28 10 L30.5 12.5 L15 28Z" fill="#f4b860" stroke="#c88838" stroke-width=".8"/><path d="M28 10 L29.5 8.5 L32 11 L30.5 12.5Z" fill="#e8a0c8"/><path d="M11 29.5 L12.5 25.5 L15 28Z" fill="#888"/></svg>
<svg style="left:98px;top:210px" width="27" height="27" viewBox="0 0 27 27"><defs><linearGradient id="sv" x1="0" y1="0" x2="1" y2="1"><stop offset="0" stop-color="#5a8cf8"/><stop offset="1" stop-color="#2060e8"/></linearGradient></defs><rect x="1.5" y="1.5" width="23" height="24" rx="2.5" fill="url(#sv)" stroke="#2a48c8" stroke-width="1.5"/><rect x="4.5" y="3" width="17" height="10.5" fill="#eef2ff"/><rect x="6" y="15.5" width="12" height="9.5" fill="#e4e4ec"/><rect x="7.5" y="17" width="2" height="5.5" fill="#1a40d0"/></svg>
<svg style="left:145px;top:211px" width="27" height="29" viewBox="0 0 27 29"><defs><linearGradient id="ud" x1="0" y1="0" x2="1" y2="1"><stop offset="0" stop-color="#5cc4ec"/><stop offset=".5" stop-color="#2a9ad8"/><stop offset="1" stop-color="#1a6aa8"/></linearGradient></defs><path d="M11.5 1.5 L1 12 L10.5 21 L10.5 15 C16 14 20 17.5 18 27.5 C26 23 26 13 21 9.5 C18 7.5 14 7.5 10.5 8 Z" fill="url(#ud)"/></svg>
<svg style="left:212px;top:209px" width="33" height="32" viewBox="0 0 33 32"><rect x="1.5" y="1.5" width="25.5" height="25" fill="#eef4fa" stroke="#90bce0" stroke-width="1.3"/><rect x="2" y="2" width="24.5" height="3.5" fill="#a8d0f0"/><g fill="#b8d0e8"><rect x="4" y="8" width="6" height="2"/><rect x="4" y="12" width="6" height="2"/><rect x="4" y="16" width="6" height="2"/><rect x="4" y="20" width="6" height="2"/></g><g fill="#d0d0d0"><rect x="12" y="8" width="4" height="1.5"/><rect x="12" y="12" width="4" height="1.5"/><rect x="12" y="16" width="4" height="1.5"/><rect x="12" y="20" width="4" height="1.5"/></g><g fill="#f4b8b8"><rect x="17" y="7" width="2.5" height="3"/><rect x="17" y="11" width="2.5" height="3"/><rect x="17" y="15" width="2.5" height="3"/></g><path d="M20.5 9 L22 10.5 L25 7 M20.5 13 L22 14.5 L25 11 M20.5 17 L22 18.5 L25 15" stroke="#7cd07c" stroke-width="1.2" fill="none"/><g transform="translate(24,23)"><rect x="-1.4" y="-7" width="2.8" height="3" rx=".5" fill="#b8b8b8" transform="rotate(0)"/><rect x="-1.4" y="-7" width="2.8" height="3" rx=".5" fill="#b8b8b8" transform="rotate(45)"/><rect x="-1.4" y="-7" width="2.8" height="3" rx=".5" fill="#b8b8b8" transform="rotate(90)"/><rect x="-1.4" y="-7" width="2.8" height="3" rx=".5" fill="#b8b8b8" transform="rotate(135)"/><rect x="-1.4" y="-7" width="2.8" height="3" rx=".5" fill="#b8b8b8" transform="rotate(180)"/><rect x="-1.4" y="-7" width="2.8" height="3" rx=".5" fill="#b8b8b8" transform="rotate(225)"/><rect x="-1.4" y="-7" width="2.8" height="3" rx=".5" fill="#b8b8b8" transform="rotate(270)"/><rect x="-1.4" y="-7" width="2.8" height="3" rx=".5" fill="#b8b8b8" transform="rotate(315)"/><circle r="5" fill="#c4c4c4"/><circle r="2.8" fill="#ececec" stroke="#b0b0b0" stroke-width=".8"/></g></svg>
<svg style="left:259px;top:209px" width="32" height="31" viewBox="0 0 32 31"><rect x="1.5" y="1.5" width="28.5" height="28" rx="2" fill="#eeeeee" stroke="#c2c2c2" stroke-width="1.5"/><rect x="3.5" y="3.5" width="24.5" height="24" fill="#f0f0f0"/><path d="M8.5 10 L8.5 24.5 L12 24.5 M8.5 17 L12 17" stroke="#a0a0a0" stroke-width="0.9" fill="none"/><rect x="6" y="5" width="5" height="5.5" rx="1" fill="#9cc0e0"/><rect x="11.5" y="14" width="5.5" height="6" rx="1.3" fill="#9cc0e0"/><rect x="11.5" y="21.5" width="5.5" height="6" rx="1.3" fill="#9cc0e0"/><g stroke="#c4c4c4" stroke-width="1"><line x1="13" y1="7.5" x2="21" y2="7.5"/><line x1="19.5" y1="17" x2="25" y2="17"/><line x1="19.5" y1="24.5" x2="25" y2="24.5"/></g></svg>
<svg style="left:306px;top:209px" width="32" height="31" viewBox="0 0 32 31"><g transform="translate(1,1)"><rect x="0.75" y="0.75" width="27.5" height="27.0" rx="1.5" fill="#e3f1fb" stroke="#8db7dc" stroke-width="1.5"/><rect x="1.5" y="1.5" width="26.0" height="3.0" fill="#fff"/><rect x="2.30" y="2.0" width="3.60" height="2.5" fill="#f7cf78"/><rect x="7.50" y="2.0" width="3.60" height="2.5" fill="#f7cf78"/><rect x="12.70" y="2.0" width="3.60" height="2.5" fill="#f7cf78"/><rect x="17.90" y="2.0" width="3.60" height="2.5" fill="#f7cf78"/><rect x="23.10" y="2.0" width="3.60" height="2.5" fill="#f7cf78"/><line x1="1.5" y1="4.50" x2="27.5" y2="4.50" stroke="#fff" stroke-width="1"/><line x1="1.5" y1="8.25" x2="27.5" y2="8.25" stroke="#fff" stroke-width="1"/><line x1="1.5" y1="12.00" x2="27.5" y2="12.00" stroke="#fff" stroke-width="1"/><line x1="1.5" y1="15.75" x2="27.5" y2="15.75" stroke="#fff" stroke-width="1"/><line x1="1.5" y1="19.50" x2="27.5" y2="19.50" stroke="#fff" stroke-width="1"/><line x1="1.5" y1="23.25" x2="27.5" y2="23.25" stroke="#fff" stroke-width="1"/><line x1="1.5" y1="27.00" x2="27.5" y2="27.00" stroke="#fff" stroke-width="1"/><line x1="6.70" y1="4.5" x2="6.70" y2="27.0" stroke="#fff" stroke-width="1"/><line x1="11.90" y1="4.5" x2="11.90" y2="27.0" stroke="#fff" stroke-width="1"/><line x1="17.10" y1="4.5" x2="17.10" y2="27.0" stroke="#fff" stroke-width="1"/><line x1="22.30" y1="4.5" x2="22.30" y2="27.0" stroke="#fff" stroke-width="1"/></g><rect x="14" y="2.5" width="5.5" height="26" fill="#8cb4e0" opacity=".85"/></svg>
<svg style="left:353px;top:208px" width="33" height="32" viewBox="0 0 33 32"><g transform="translate(5,6)"><rect x="0.75" y="0.75" width="24.5" height="23.5" rx="1.5" fill="#e3f1fb" stroke="#8db7dc" stroke-width="1.5"/><rect x="1.5" y="1.5" width="23.0" height="2.5" fill="#fff"/><rect x="2.30" y="2.0" width="4.15" height="2.0" fill="#f7cf78"/><rect x="8.05" y="2.0" width="4.15" height="2.0" fill="#f7cf78"/><rect x="13.80" y="2.0" width="4.15" height="2.0" fill="#f7cf78"/><rect x="19.55" y="2.0" width="4.15" height="2.0" fill="#f7cf78"/><line x1="1.5" y1="4.00" x2="24.5" y2="4.00" stroke="#fff" stroke-width="1"/><line x1="1.5" y1="7.90" x2="24.5" y2="7.90" stroke="#fff" stroke-width="1"/><line x1="1.5" y1="11.80" x2="24.5" y2="11.80" stroke="#fff" stroke-width="1"/><line x1="1.5" y1="15.70" x2="24.5" y2="15.70" stroke="#fff" stroke-width="1"/><line x1="1.5" y1="19.60" x2="24.5" y2="19.60" stroke="#fff" stroke-width="1"/><line x1="1.5" y1="23.50" x2="24.5" y2="23.50" stroke="#fff" stroke-width="1"/><line x1="7.25" y1="4" x2="7.25" y2="23.5" stroke="#fff" stroke-width="1"/><line x1="13.00" y1="4" x2="13.00" y2="23.5" stroke="#fff" stroke-width="1"/><line x1="18.75" y1="4" x2="18.75" y2="23.5" stroke="#fff" stroke-width="1"/></g><rect x="1.8" y="2" width="13.5" height="12" rx="1" fill="#9cd48a" stroke="#88c478" stroke-width="1"/><path d="M4.5 5 L12.5 11 M12.5 5 L4.5 11" stroke="#d8f0d0" stroke-width="1.4"/><rect x="3" y="11.8" width="11" height="1" fill="#f0fff0"/></svg>
<svg style="left:423px;top:210px" width="32" height="29" viewBox="0 0 32 29"><g transform="translate(1,1)"><rect x="1.0" y="1.0" width="26" height="25" rx="1.5" fill="#e3f1fb" stroke="#5a8ec0" stroke-width="2"/><rect x="2" y="2" width="24" height="2.5" fill="#fff"/><rect x="2.80" y="2.5" width="4.40" height="2.0" fill="#f7cf78"/><rect x="8.80" y="2.5" width="4.40" height="2.0" fill="#f7cf78"/><rect x="14.80" y="2.5" width="4.40" height="2.0" fill="#f7cf78"/><rect x="20.80" y="2.5" width="4.40" height="2.0" fill="#f7cf78"/><line x1="2" y1="4.50" x2="26" y2="4.50" stroke="#fff" stroke-width="1"/><line x1="2" y1="8.60" x2="26" y2="8.60" stroke="#fff" stroke-width="1"/><line x1="2" y1="12.70" x2="26" y2="12.70" stroke="#fff" stroke-width="1"/><line x1="2" y1="16.80" x2="26" y2="16.80" stroke="#fff" stroke-width="1"/><line x1="2" y1="20.90" x2="26" y2="20.90" stroke="#fff" stroke-width="1"/><line x1="2" y1="25.00" x2="26" y2="25.00" stroke="#fff" stroke-width="1"/><line x1="8.00" y1="4.5" x2="8.00" y2="25" stroke="#fff" stroke-width="1"/><line x1="14.00" y1="4.5" x2="14.00" y2="25" stroke="#fff" stroke-width="1"/><line x1="20.00" y1="4.5" x2="20.00" y2="25" stroke="#fff" stroke-width="1"/></g><rect x="4" y="13.5" width="19" height="6" rx="1.5" fill="#ec5a48" stroke="#d04030" stroke-width=".8"/><path d="M23.5 11 L30 16.5 L23.5 22Z" fill="#ec4a38"/></svg>
<svg style="left:472px;top:211px" width="28" height="29" viewBox="0 0 28 29"><path d="M3 17 C2 10 7 6 12 6.5 L11.5 3.5 L17 8 L12 11.5 L12 9 C8 9 5 12 5.5 17Z" fill="#46d046"/><path d="M22 12 C24 18 19 23 14.5 22.5 L14.5 25.5 L9 21.5 L14 18 L14.5 20 C18 20 21 17 20 12Z" fill="#46d046"/><text x="16.5" y="11.5" font-family="Liberation Sans" font-weight="bold" font-size="11" fill="#f4a048" stroke="#e08030" stroke-width=".4">B</text><text x="1.5" y="26.5" font-family="Liberation Sans" font-weight="bold" font-size="11" fill="#f4a048" stroke="#e08030" stroke-width=".4">A</text></svg>
<svg style="left:544px;top:214px" width="22" height="23" viewBox="0 0 22 23"><defs><linearGradient id="fn" x1="0" x2="1"><stop offset="0" stop-color="#c8c8c8"/><stop offset=".5" stop-color="#f0f0f0"/><stop offset="1" stop-color="#a8a8a8"/></linearGradient></defs><path d="M1 2 L20 2 L20 4 L12.5 12 L12.5 21 L9 21 L9 12 L1 4Z" fill="url(#fn)" stroke="#a0a0a0" stroke-width=".8"/><ellipse cx="10.5" cy="2.5" rx="9.5" ry="1.5" fill="#e8e8e8" stroke="#b0b0b0" stroke-width=".6"/></svg>
<svg style="left:599px;top:212px" width="25" height="24" viewBox="0 0 25 24"><path d="M2 17.5 L4.5 12 L16 2.5 C17.5 1.5 19.5 1.5 20.5 3 C21.5 4.5 21 6 20 7 L8.5 16.5Z" fill="#dce4f4" stroke="#8c9cc0" stroke-width="1"/><path d="M2 17.5 L4.5 12 L8.5 16.5Z" fill="#f4e0a0" stroke="#b0a070" stroke-width=".6"/><rect x="0.5" y="19" width="22" height="3.5" rx="1" fill="#f6dcb8"/></svg>
<svg style="left:640px;top:212px" width="25" height="24" viewBox="0 0 25 24"><path d="M2 17.5 L4.5 12 L16 2.5 C17.5 1.5 19.5 1.5 20.5 3 C21.5 4.5 21 6 20 7 L8.5 16.5Z" fill="#dce4f4" stroke="#8c9cc0" stroke-width="1"/><path d="M2 17.5 L4.5 12 L8.5 16.5Z" fill="#f4e0a0" stroke="#b0a070" stroke-width=".6"/><rect x="0.5" y="19" width="22" height="3.5" rx="1" fill="#3ee48c"/></svg>
<svg style="left:701px;top:214px" width="19" height="19" viewBox="0 0 19 19"><rect x="1.5" y="1.5" width="15.5" height="15.5" rx="1" fill="#eef6f6" stroke="#78a4b0" stroke-width="1.8"/><path d="M4.5 9 L8 12.5 L14 5.5" stroke="#6ede6e" stroke-width="2.3" fill="none" stroke-linecap="round" stroke-linejoin="round"/></svg>
<svg style="left:743px;top:210px" width="25" height="30" viewBox="0 0 25 30"><path d="M14 13 L21.5 2 C22.5 1 24 2 23.5 3.5 L17 15Z" fill="#4a62b8" stroke="#2a3a80" stroke-width=".8"/><path d="M12 12 L18 16 L14 22 L3 28.5 L8.5 17.5Z" fill="#e8c060" stroke="#806020" stroke-width=".8"/><path d="M3 28.5 L10 19" stroke="#604010" stroke-width="1"/></svg>
<svg style="left:831px;top:216px" width="23" height="24" viewBox="0 0 23 24"><path d="M2 3.5 C9 1.5 15 5 16 13 L19.5 12.5 L13 21.5 L9 12 L12.5 13 C11.5 8 8 5 2 3.5Z" fill="#e8421e"/></svg>
<svg style="left:881px;top:214px" width="23" height="23" viewBox="0 0 23 23"><path d="M2 19 C2 11 7 6 14 6 L14 2 L21.5 7.5 L14.5 12 L14.5 9.5 C9 9.5 4 12.5 2 19Z" fill="#e8421e"/></svg>
<div class="a" style="left:681px;top:212px;width:1px;height:26px;background:#4a4a4a"></div>
<div class="a" style="left:809px;top:212px;width:1px;height:25px;background:#4a4a4a"></div>
</body></html>
